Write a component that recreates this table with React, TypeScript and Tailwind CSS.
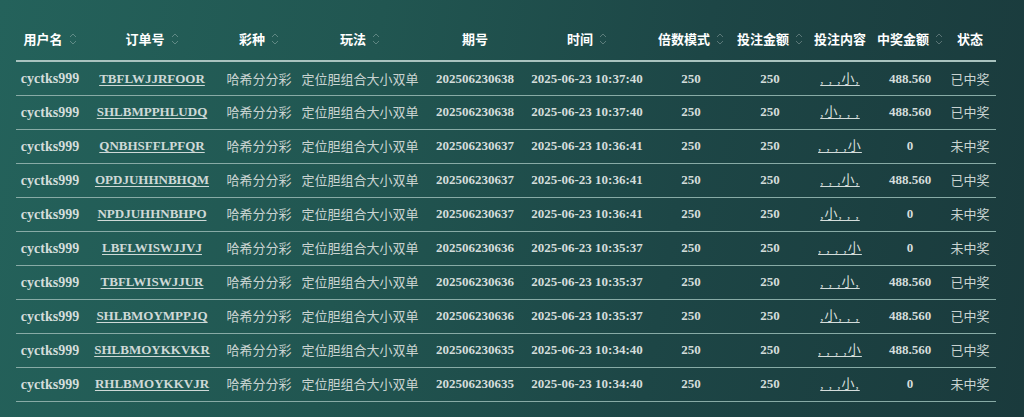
import React from "react"

const COLS = [
  { label: "用户名", w: "w-[68px]", sort: true },
  { label: "订单号", w: "w-[136px]", sort: true },
  { label: "彩种", w: "w-[78px]", sort: true },
  { label: "玩法", w: "w-[124px]", sort: true },
  { label: "期号", w: "w-[106px]", sort: false },
  { label: "时间", w: "w-[118px]", sort: true },
  { label: "倍数模式", w: "w-[90px]", sort: true },
  { label: "投注金额", w: "w-[68px]", sort: true },
  { label: "投注内容", w: "w-[72px]", sort: false },
  { label: "中奖金额", w: "w-[68px]", sort: true },
  { label: "状态", w: "w-[52px]", sort: false },
]

const ROWS = [
  { order: "TBFLWJJRFOOR", issue: "202506230638", time: "2025-06-23 10:37:40", bet: ", , ,小,", win: "488.560", status: "已中奖" },
  { order: "SHLBMPPHLUDQ", issue: "202506230638", time: "2025-06-23 10:37:40", bet: ",小, , ,", win: "488.560", status: "已中奖" },
  { order: "QNBHSFFLPFQR", issue: "202506230637", time: "2025-06-23 10:36:41", bet: ", , , ,小", win: "0", status: "未中奖" },
  { order: "OPDJUHHNBHQM", issue: "202506230637", time: "2025-06-23 10:36:41", bet: ", , ,小,", win: "488.560", status: "已中奖" },
  { order: "NPDJUHHNBHPO", issue: "202506230637", time: "2025-06-23 10:36:41", bet: ",小, , ,", win: "0", status: "未中奖" },
  { order: "LBFLWISWJJVJ", issue: "202506230636", time: "2025-06-23 10:35:37", bet: ", , , ,小", win: "0", status: "未中奖" },
  { order: "TBFLWISWJJUR", issue: "202506230636", time: "2025-06-23 10:35:37", bet: ", , ,小,", win: "488.560", status: "已中奖" },
  { order: "SHLBMOYMPPJQ", issue: "202506230636", time: "2025-06-23 10:35:37", bet: ",小, , ,", win: "488.560", status: "已中奖" },
  { order: "SHLBMOYKKVKR", issue: "202506230635", time: "2025-06-23 10:34:40", bet: ", , , ,小", win: "488.560", status: "已中奖" },
  { order: "RHLBMOYKKVJR", issue: "202506230635", time: "2025-06-23 10:34:40", bet: ", , ,小,", win: "0", status: "未中奖" },
]

const serif = "font-['Liberation_Serif','Noto_Sans_CJK_SC',serif] font-bold"
const cjk = "font-['Noto_Sans_CJK_SC',sans-serif] text-[#c9d3d1]"

function SortIcon() {
  return (
    <svg width="8" height="14" viewBox="0 0 8 14" fill="none" className="ml-[6px] shrink-0">
      <path d="M1 5 L4 2 L7 5" stroke="rgba(255,255,255,0.28)" strokeWidth="1" />
      <path d="M1 9 L4 12 L7 9" stroke="rgba(255,255,255,0.28)" strokeWidth="1" />
    </svg>
  )
}

export default function App() {
  return (
    <div className="min-h-screen w-full bg-[linear-gradient(100deg,#24625b_0%,#215651_35%,#1d4646_65%,#1a3a3c_100%)] pt-[20px] pl-[16px]">
      <table className="w-[980px] table-fixed border-collapse text-[13px]">
        <colgroup>
          {COLS.map((c) => (
            <col key={c.label} className={c.w} />
          ))}
        </colgroup>
        <thead>
          <tr className="h-[41px] border-b-2 border-[#a9c3bf]">
            {COLS.map((c) => (
              <th key={c.label} className="p-0 pb-[2px] align-middle">
                <div className="flex items-center justify-center text-white font-bold font-['Noto_Sans_CJK_SC',sans-serif]">
                  <span>{c.label}</span>
                  {c.sort && <SortIcon />}
                </div>
              </th>
            ))}
          </tr>
        </thead>
        <tbody className="text-[#d4dddb]">
          {ROWS.map((r, i) => (
            <tr key={i} className="h-[34px] border-b border-[#88aba6] text-center">
              <td className={`p-0 ${serif} text-[14px]`}>cyctks999</td>
              <td className={`p-0 ${serif}`}>
                <span className="underline underline-offset-2 text-[#cfd9d7]">{r.order}</span>
              </td>
              <td className={`p-0 ${cjk}`}>哈希分分彩</td>
              <td className={`p-0 ${cjk} whitespace-nowrap`}>定位胆组合大小双单</td>
              <td className={`p-0 ${serif}`}>{r.issue}</td>
              <td className={`p-0 ${serif} whitespace-nowrap`}>{r.time}</td>
              <td className={`p-0 ${serif}`}>250</td>
              <td className={`p-0 ${serif}`}>250</td>
              <td className="p-0 font-['Liberation_Serif','Noto_Sans_CJK_SC',serif] text-[#d4dddb]">
                <span className="underline underline-offset-2 whitespace-pre tracking-[1px]">{r.bet}</span>
              </td>
              <td className={`p-0 ${serif}`}>{r.win}</td>
              <td className={`p-0 ${cjk}`}>{r.status}</td>
            </tr>
          ))}
        </tbody>
      </table>
    </div>
  )
}
